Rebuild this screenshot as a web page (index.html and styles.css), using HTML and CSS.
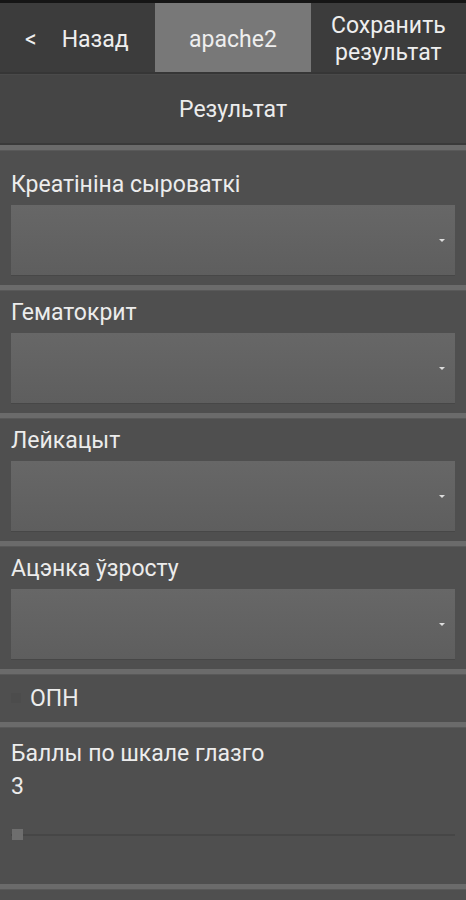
FILE: index.html
```html
<!DOCTYPE html>
<html lang="ru">
<head>
    <meta charset="UTF-8">
    <meta name="viewport" content="width=device-width, initial-scale=1.0">
    <title>apache2</title>
    <link rel="stylesheet" href="styles.css">
</head>
<body>
    <header class="topbar">
        <a class="tab" href="#back"><span class="arrow">&lt;</span> Назад</a>
        <a class="tab active" href="#apache2">apache2</a>
        <a class="tab" href="#save">Сохранить<br>результат</a>
    </header>
    <div class="result-bar">Результат</div>

    <div class="form">
        <div class="section first">
            <div class="label">Креатініна сыроваткі</div>
            <div class="select"><span class="caret"></span></div>
        </div>
        <div class="section">
            <div class="label">Гематокрит</div>
            <div class="select"><span class="caret"></span></div>
        </div>
        <div class="section">
            <div class="label">Лейкацыт</div>
            <div class="select"><span class="caret"></span></div>
        </div>
        <div class="section">
            <div class="label">Ацэнка ўзросту</div>
            <div class="select"><span class="caret"></span></div>
        </div>
        <div class="section check">
            <span class="box"></span>
            <span class="label">ОПН</span>
        </div>
        <div class="section slider-section">
            <div class="label">Баллы по шкале глазго</div>
            <div class="value">3</div>
            <div class="slider">
                <span class="thumb"></span>
            </div>
        </div>
        <div class="section tail"></div>
    </div>
</body>
</html>
```

FILE: styles.css
```css
body {
    margin: 0;
    padding: 0;
    background-color: #4f4f4f;
    color: #ececec;
    font-family: Roboto, "Noto Sans", "DejaVu Sans", sans-serif;
}
.topbar {
    display: grid;
    grid-template-columns: 1fr 1fr 1fr;
    height: 69px;
    border-top: 3px solid #151515;
    border-bottom: 2px solid #363636;
    background-color: #3c3c3c;
}
.tab {
    display: flex;
    align-items: center;
    justify-content: center;
    color: #eeeeee;
    text-decoration: none;
    font-size: 23px;
    line-height: 27px;
    text-align: center;
    padding-top: 3px;
    box-sizing: border-box;
}
.tab:first-child {
    justify-content: flex-start;
    padding-left: 25px;
}
.arrow {
    margin-right: 25px;
}
.tab.active {
    background-color: #787878;
}
.result-bar {
    display: flex;
    align-items: center;
    justify-content: center;
    background-color: #454545;
    border-top: 1px solid #4a4a4a;
    border-bottom: 2px solid #3a3a3a;
    font-size: 23px;
    padding-top: 1px;
    box-sizing: border-box;
    height: 71px;
}
.section {
    border-top: 5px solid #6b6b6b;
    padding: 10px 11px 10px;
    box-shadow: inset 0 1px 0 #595959;
}
.section.first {
    padding-top: 22px;
}
.label {
    font-size: 23px;
    line-height: 26px;
}
.select {
    position: relative;
    height: 70px;
    margin-top: 7px;
    background: linear-gradient(#676767, #5e5e5e);
    box-shadow: 0 1px 0 #474747;
}
.caret {
    position: absolute;
    right: 10px;
    top: 34px;
    border-left: 3px solid transparent;
    border-right: 3px solid transparent;
    border-top: 3px solid #dddddd;
}
.check {
    display: flex;
    align-items: center;
    padding-top: 0;
    padding-bottom: 0;
    box-sizing: border-box;
    height: 53px;
}
.check .label {
    padding-top: 2px;
}
.box {
    width: 10px;
    height: 10px;
    margin-right: 9px;
    background-color: #4c4c4c;
}
.slider-section {
    padding-top: 14px;
    height: 162px;
    box-sizing: border-box;
}
.value {
    font-size: 23px;
    line-height: 26px;
    margin-top: 7px;
}
.slider {
    position: relative;
    margin-top: 29px;
    height: 11px;
}
.slider::before {
    content: "";
    position: absolute;
    left: 0;
    right: 0;
    top: 5px;
    height: 2px;
    background-color: #464646;
}
.thumb {
    position: absolute;
    left: 1px;
    top: 0;
    width: 11px;
    height: 11px;
    background-color: #6e6e6e;
}
.tail {
    height: 20px;
}
```
